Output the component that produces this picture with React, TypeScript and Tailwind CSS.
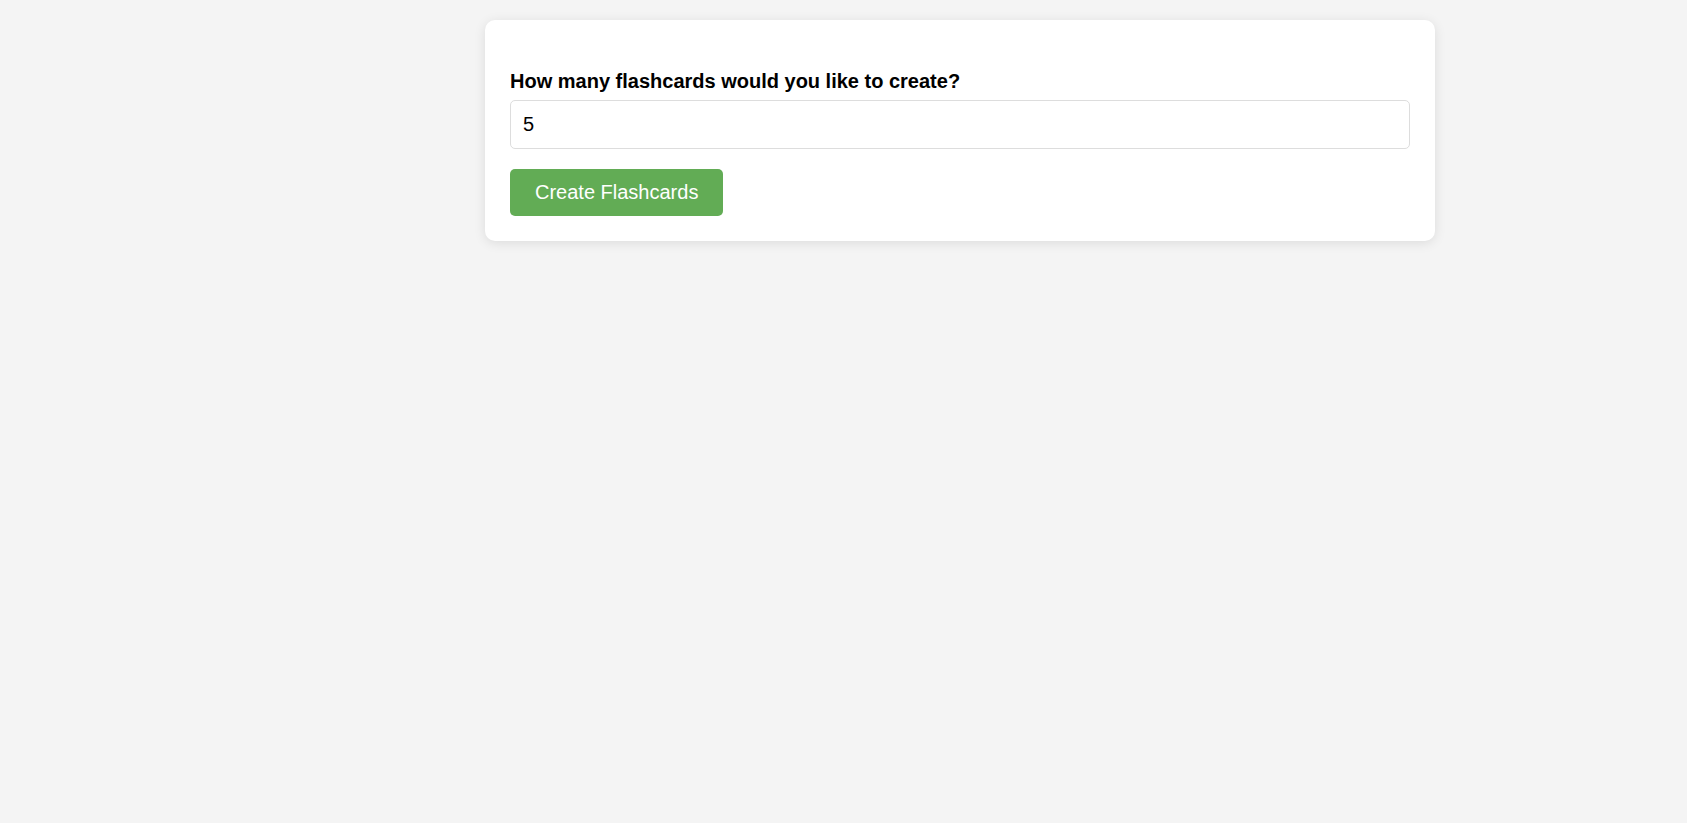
export default function App() {
    return (
        <div className="min-h-screen bg-[#f4f4f4] font-['Liberation_Sans',Arial,sans-serif] text-black">
            <div className="pt-5 pl-[485px]">
                <div className="w-[950px] bg-white rounded-[10px] shadow-[0_2px_12px_rgba(0,0,0,0.1)] px-[25px] pt-[50px] pb-[25px]">
                    <label htmlFor="count" className="block text-[20px] leading-[23px] font-bold mb-[7px]">
                        How many flashcards would you like to create?
                    </label>
                    <input
                        id="count"
                        type="number"
                        defaultValue={5}
                        className="block w-full border border-[#dddddd] rounded-[5px] px-3 py-3 text-[20px] leading-[23px] outline-none"
                    />
                    <button className="mt-5 bg-[#62ac55] text-white text-[20px] leading-[23px] px-[25px] py-3 rounded-[5px]">
                        Create Flashcards
                    </button>
                </div>
            </div>
        </div>
    )
}
